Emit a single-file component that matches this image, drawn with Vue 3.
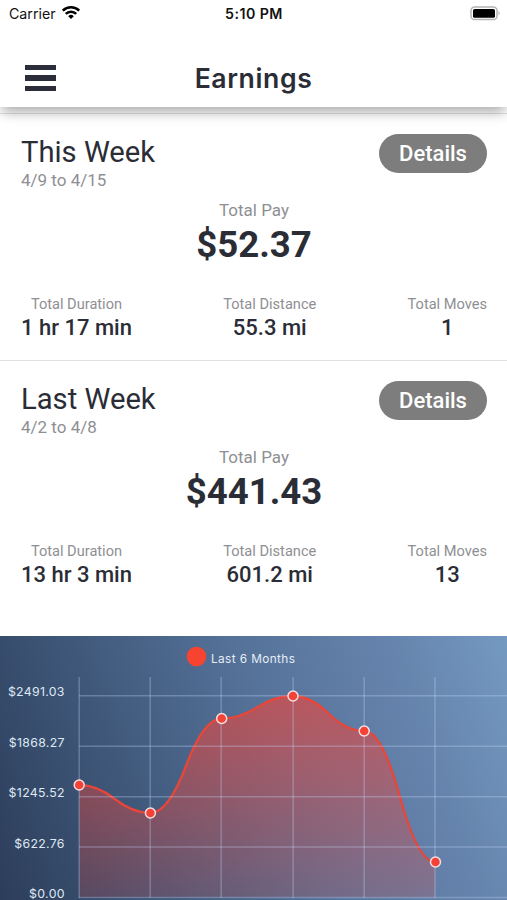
<template>
  <div class="earnings-page">
    <header class="top">
      <!-- Status bar -->
      <div class="status-bar">
        <div class="carrier">
          <span>Carrier</span>
          <svg class="wifi" width="20" height="16" viewBox="0 0 20 16">
            <path d="M1.8 5.6 A11.8 11.8 0 0 1 18.2 5.6" />
            <path d="M4.8 8.9 A7.4 7.4 0 0 1 15.2 8.9" />
            <path class="wifi-dot" d="M10 14 L7.2 11.2 A4 4 0 0 1 12.8 11.2 Z" />
          </svg>
        </div>
        <span class="clock">5:10 PM</span>
        <svg class="battery" width="31" height="15" viewBox="0 0 31 15">
          <rect x="1" y="1" width="26" height="12.6" rx="3.6" fill="#fff" stroke="#b4b4b4" stroke-width="1.5" />
          <rect x="3" y="2.9" width="22" height="8.9" rx="1.6" fill="#000" />
          <path d="M28.5 5 Q31 7.2 28.5 9.5 Z" fill="#b4b4b4" />
        </svg>
      </div>

      <div class="nav-bar">
        <button class="menu-btn" aria-label="Menu">
          <span></span>
          <span></span>
          <span></span>
        </button>
        <h1 class="nav-title">Earnings</h1>
      </div>
    </header>

    <section v-for="week in weeks" :key="week.title" class="week">
      <div class="week-header">
        <div>
          <div class="week-title">{{ week.title }}</div>
          <div class="week-range">{{ week.range }}</div>
        </div>
        <button class="details-btn">Details</button>
      </div>
      <div class="pay">
        <div class="pay-label">Total Pay</div>
        <div class="pay-value">{{ week.pay }}</div>
      </div>
      <div class="stats">
        <div v-for="stat in week.stats" :key="stat.label" class="stat">
          <div class="stat-label">{{ stat.label }}</div>
          <div class="stat-value">{{ stat.value }}</div>
        </div>
      </div>
    </section>

    <!-- Earnings chart -->
    <section class="chart">
      <svg width="507" height="264" viewBox="0 0 507 264">
        <defs>
          <linearGradient id="areaFill" x1="0" y1="60" x2="0" y2="264" gradientUnits="userSpaceOnUse">
            <stop offset="0" stop-color="#f44336" stop-opacity="0.62" />
            <stop offset="1" stop-color="#f44336" stop-opacity="0.17" />
          </linearGradient>
        </defs>
        <path :d="areaPath" fill="url(#areaFill)" />
        <path :d="linePath" class="line" />
        <g class="grid">
          <line v-for="row in rows" :key="row.y" x1="79" x2="507" :y1="row.y" :y2="row.y" />
          <line v-for="x in columns" :key="x" :x1="x" :x2="x" y1="41" y2="262" />
        </g>
        <g class="axis">
          <text v-for="row in rows" :key="row.label" x="64.8" :y="row.y + 0.5">{{ row.label }}</text>
        </g>
        <circle v-for="p in points" :key="p.x" class="dot" :cx="p.x" :cy="p.y" r="5" />
        <circle cx="196.5" cy="20.5" r="9.8" fill="#f94331" />
        <text class="legend" x="211" y="26.5">Last 6 Months</text>
      </svg>
    </section>
  </div>
</template>

<script setup>
import { computed } from 'vue';

const weeks = [
  {
    title: 'This Week',
    range: '4/9 to 4/15',
    pay: '$52.37',
    stats: [
      { label: 'Total Duration', value: '1 hr 17 min' },
      { label: 'Total Distance', value: '55.3 mi' },
      { label: 'Total Moves', value: '1' }
    ]
  },
  {
    title: 'Last Week',
    range: '4/2 to 4/8',
    pay: '$441.43',
    stats: [
      { label: 'Total Duration', value: '13 hr 3 min' },
      { label: 'Total Distance', value: '601.2 mi' },
      { label: 'Total Moves', value: '13' }
    ]
  }
];

const rows = [
  { label: '$2491.03', y: 59.8 },
  { label: '$1868.27', y: 110.2 },
  { label: '$1245.52', y: 160.7 },
  { label: '$622.76', y: 211.1 },
  { label: '$0.00', y: 261.5 }
];

const columns = [79.2, 150.2, 221.2, 293.2, 364.2, 435];

const points = [
  { x: 79.2, y: 149 },
  { x: 150.4, y: 177 },
  { x: 221.7, y: 82.5 },
  { x: 293, y: 60 },
  { x: 364.2, y: 95 },
  { x: 435.5, y: 226 }
];

// Two quadratic halves between each pair of points
const linePath = computed(() => {
  let d = `M${points[0].x} ${points[0].y}`;
  for (let i = 0; i < points.length - 1; i++) {
    const a = points[i];
    const b = points[i + 1];
    const midX = (a.x + b.x) / 2;
    const midY = (a.y + b.y) / 2;
    d += ` Q${(midX + a.x) / 2} ${a.y} ${midX} ${midY}`;
    d += ` Q${(midX + b.x) / 2} ${b.y} ${b.x} ${b.y}`;
  }
  return d;
});

const areaPath = computed(() => `${linePath.value} L435.5 261.5 L79.2 261.5 Z`);
</script>

<style>
body {
  margin: 0;
  overflow: hidden;
}
</style>

<style scoped>
.earnings-page {
  display: flex;
  flex-direction: column;
  width: 507px;
  height: 900px;
  overflow: hidden;
  background: #fff;
  color: #2b2d36;
  font-family: Roboto, 'Liberation Sans', sans-serif;
}

button {
  border: 0;
  font-family: inherit;
}

.top {
  height: 107px;
  margin-bottom: 6px;
  box-shadow: 0 7px 12px -2px rgba(0, 0, 0, 0.33);
}

.status-bar {
  display: grid;
  grid-template-columns: 1fr auto 1fr;
  align-items: center;
  box-sizing: border-box;
  height: 27px;
  padding: 0 6px 0 9px;
  font-family: Inter, sans-serif;
  font-size: 14.2px;
  color: #111;
}

.carrier {
  display: flex;
  align-items: center;
  gap: 5px;
}

.wifi {
  margin-top: -2px;
  fill: none;
  stroke: #000;
  stroke-width: 2.6;
}

.wifi .wifi-dot {
  fill: #000;
  stroke: none;
}

.clock {
  margin-right: 2px;
  font-weight: 600;
  letter-spacing: 0.45px;
}

.battery {
  justify-self: end;
}

.nav-bar {
  display: grid;
  grid-template-columns: 32px 1fr 32px;
  align-items: center;
  height: 80px;
  padding: 22px 25px 0;
  box-sizing: border-box;
}

.menu-btn {
  display: flex;
  flex-direction: column;
  gap: 5px;
  width: 31px;
  padding: 0;
  background: none;
}

.menu-btn span {
  height: 5.2px;
  background: #2b2d3b;
}

.nav-title {
  margin: 0;
  font-family: Inter, sans-serif;
  font-size: 26.6px;
  font-weight: 600;
  letter-spacing: 0.6px;
  text-align: center;
}

/* Weekly summary */
.week {
  box-sizing: border-box;
  height: 247px;
  padding: 20px 20px 0 21px;
  border-top: 1px solid rgba(0, 0, 0, 0.12);
}

.week:nth-of-type(2) {
  height: 276px;
}

.week-header {
  display: flex;
  justify-content: space-between;
  height: 58px;
}

.week-title {
  font-size: 29.2px;
  line-height: 37px;
}

.week-range {
  margin-top: -1px;
  font-size: 17px;
  line-height: 20px;
  color: #8e8f93;
}

.details-btn {
  width: 108px;
  height: 39px;
  padding: 0;
  border-radius: 20px;
  background: #7d7d7d;
  color: #fff;
  font-size: 22px;
  font-weight: 500;
}

.pay {
  text-align: center;
}

.pay-label {
  margin-top: 7px;
  font-size: 17px;
  line-height: 22px;
  color: #8e8f93;
}

.pay-value {
  margin-top: 1px;
  font-size: 36.6px;
  font-weight: 700;
  line-height: 46px;
}

.stats {
  display: flex;
  justify-content: space-between;
  margin-top: 26px;
  text-align: center;
}

.stat-label {
  font-size: 14.6px;
  line-height: 20px;
  color: #8e8f93;
}

.stat-value {
  font-size: 22px;
  font-weight: 500;
  line-height: 27px;
}

/* Chart */
.chart {
  height: 264px;
  background: linear-gradient(70deg, #2c3d5a 0%, #40597b 28%, #56739a 56%, #6482ab 78%, #7499c1 100%);
}

.chart svg {
  display: block;
}

.line {
  fill: none;
  stroke: #e8463a;
  stroke-width: 2.3;
}

.grid line {
  stroke: #c8dcff;
  stroke-opacity: 0.3;
  stroke-width: 1.5;
}

.axis text {
  fill: #dfe8f4;
  font-family: Inter, sans-serif;
  font-size: 12.3px;
  letter-spacing: 0.32px;
  text-anchor: end;
}

.legend {
  fill: #e6edf6;
  font-family: Inter, sans-serif;
  font-size: 11.8px;
  letter-spacing: 0.4px;
}

.dot {
  fill: #f44336;
  stroke: #f3dfe3;
  stroke-width: 1.5;
}
</style>
